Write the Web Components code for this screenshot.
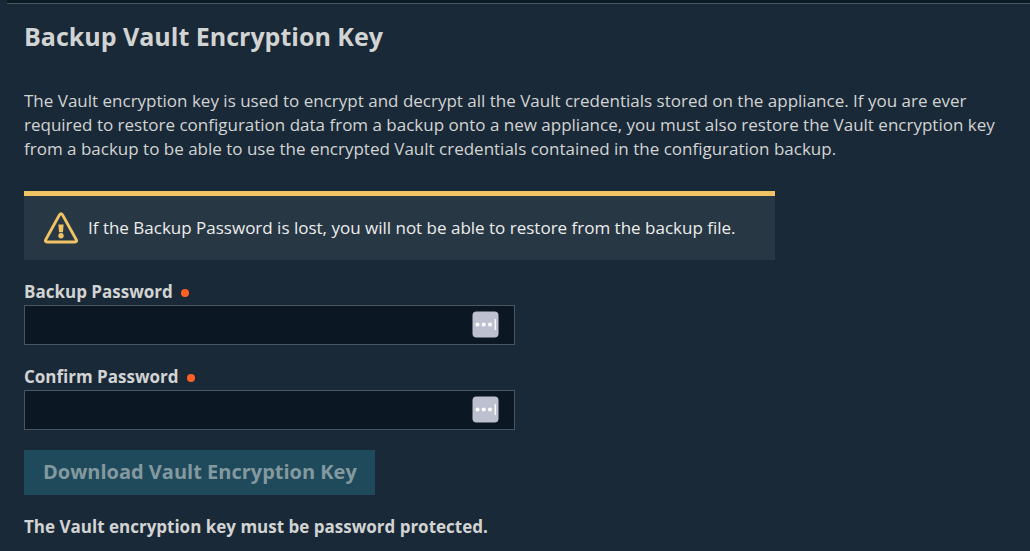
<!DOCTYPE html>
<html lang="en">
<head>
<meta charset="utf-8">
<title>Backup Vault Encryption Key</title>
<style>
  html { background: #1a2938; }
  body { margin: 0; font-family: "Open Sans", "Noto Sans", sans-serif; font-size: 17px; line-height: 24px; color: #d2d4d3; }
</style>
</head>
<body>
<vault-panel>
  <span slot="title">Backup Vault Encryption Key</span>
  <span slot="intro">The Vault encryption key is used to encrypt and decrypt all the Vault credentials stored on the appliance. If you are ever required to restore configuration data from a backup onto a new appliance, you must also restore the Vault encryption key from a backup to be able to use the encrypted Vault credentials contained in the configuration backup.</span>
  <warning-banner>If the Backup Password is lost, you will not be able to restore from the backup file.</warning-banner>
  <password-field label="Backup Password" name="backup"></password-field>
  <password-field label="Confirm Password" name="confirm"></password-field>
  <action-button>Download Vault Encryption Key</action-button>
  <form-note>The Vault encryption key must be password protected.</form-note>
</vault-panel>

<script>
class ShadowElement extends HTMLElement {
  constructor() {
    super();
    this.attachShadow({ mode: "open" }).innerHTML = this.constructor.markup;
  }
}

customElements.define("vault-panel", class extends ShadowElement {
  static markup = `
    <style>
      :host { display: block; }
      .edge { height: 3px; margin-left: 7px; background: #0c1a23; border-bottom: 1px solid #485662; }
      main { padding: 15px 8px 12px 24px; }
      h1 { margin: 0 0 36px; font-size: 25px; line-height: 34px; font-weight: 700; }
      p { margin: 0 0 30px; }
      .form { display: flex; flex-direction: column; align-items: flex-start; gap: 20px; }
    </style>
    <div class="edge"></div>
    <main>
      <h1><slot name="title"></slot></h1>
      <p><slot name="intro"></slot></p>
      <div class="form"><slot></slot></div>
    </main>`;
});

customElements.define("warning-banner", class extends ShadowElement {
  static markup = `
    <style>
      :host { display: flex; align-items: center; gap: 10px; box-sizing: border-box; min-height: 69px;
        width: 751px; max-width: 100%; padding: 0 20px; border-top: 5px solid #f0c365; background: #283744; color: #eceeed; }
      svg { flex: none; display: block; }
    </style>
    <svg width="34" height="32" viewBox="0 0 34 32" role="img" aria-label="Warning">
      <path d="M15.4 3 1.7 27.7Q.6 30 3 30H31Q33.4 30 32.3 27.7L18.6 3Q17 .5 15.4 3Z" fill="none" stroke="#f0c365" stroke-width="2.8" stroke-linejoin="round"/>
      <path d="M14.4 12.5h5.2l-.6 7.8h-4Z" fill="#f0c365"/>
      <circle cx="17" cy="23.8" r="2.7" fill="#f0c365"/>
    </svg>
    <span><slot></slot></span>`;
});

customElements.define("password-field", class extends ShadowElement {
  static markup = `
    <style>
      :host { display: block; width: 491px; max-width: 100%; }
      label { display: flex; align-items: center; gap: 8px; padding-bottom: 1px; font-weight: 700; line-height: 24px; }
      .dot { width: 8px; height: 8px; margin-top: 2px; border-radius: 50%; background: #ff6024; }
      .box { display: flex; align-items: center; box-sizing: border-box; height: 40px; padding: 0 15px 1px 12px;
        background: #0b1823; border: 1px solid #485662; }
      input { flex: 1; min-width: 0; padding: 0; border: 0; outline: 0; background: none; color: inherit; font: inherit; }
      button { flex: none; padding: 0; border: 0; background: none; }
      svg { display: block; }
    </style>
    <label for="field"><span class="text"></span><span class="dot"></span></label>
    <div class="box">
      <input id="field" type="password" required>
      <button type="button" aria-label="Fill password">
        <svg width="27" height="27" viewBox="0 0 27 27">
          <rect x=".5" y=".5" width="26" height="26" rx="4" fill="#bdc0ce"/>
          <g fill="#fff"><circle cx="5.5" cy="13.5" r="2"/><circle cx="11.7" cy="13.5" r="2"/><circle cx="18" cy="13.5" r="2"/><rect x="22.6" y="8" width="1.3" height="11"/></g>
        </svg>
      </button>
    </div>`;
  connectedCallback() {
    this.shadowRoot.querySelector(".text").textContent = this.getAttribute("label");
    this.shadowRoot.querySelector("input").name = this.getAttribute("name");
  }
});

customElements.define("action-button", class extends ShadowElement {
  static markup = `
    <style>
      :host { display: block; }
      button { display: block; height: 45px; padding: 0 18px 2px 19px; border: 0; background: #1f4a5c; color: #84999f;
        font: inherit; font-size: 20px; font-weight: 700; }
    </style>
    <button type="button" disabled><slot></slot></button>`;
});

customElements.define("form-note", class extends ShadowElement {
  static markup = `
    <style>:host { display: block; font-weight: 700; }</style>
    <slot></slot>`;
});
</script>
</body>
</html>
